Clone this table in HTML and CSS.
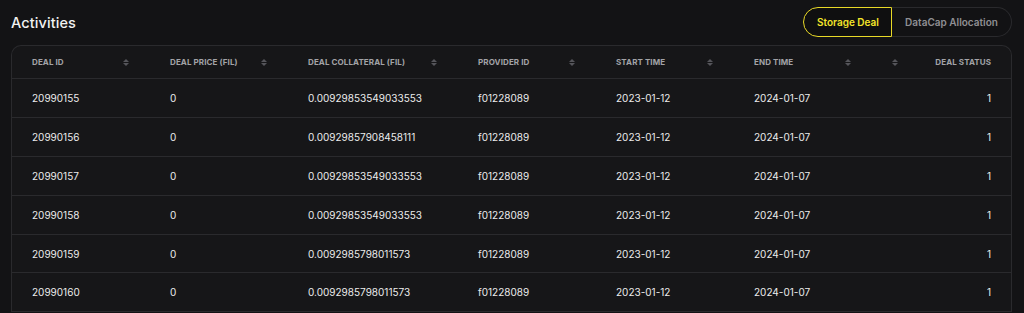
FILE: index.html
```html
<!DOCTYPE html>
<html>
<head>
<meta charset="utf-8">
<link rel="stylesheet" href="styles.css">
</head>
<body>
<div class="page">
  <div class="topbar">
    <h1 class="title">Activities</h1>
    <div class="tabs">
      <button class="tab tab-active">Storage Deal</button>
      <button class="tab tab-inactive">DataCap Allocation</button>
    </div>
  </div>
  <div class="table-wrap">
    <table class="table">
      <colgroup>
        <col class="c1"><col class="c2"><col class="c3"><col class="c4"><col class="c5"><col class="c6"><col class="c7">
      </colgroup>
      <thead>
        <tr>
          <th><div class="th"><span>Deal ID</span><span class="sort"></span></div></th>
          <th><div class="th"><span>Deal Price (FIL)</span><span class="sort"></span></div></th>
          <th><div class="th"><span>Deal Collateral (FIL)</span><span class="sort"></span></div></th>
          <th><div class="th"><span>Provider ID</span><span class="sort"></span></div></th>
          <th><div class="th"><span>Start Time</span><span class="sort"></span></div></th>
          <th><div class="th"><span>End Time</span><span class="sort"></span></div></th>
          <th><div class="th"><span class="sort"></span><span>Deal Status</span></div></th>
        </tr>
      </thead>
      <tbody>
        <tr><td>20990155</td><td>0</td><td>0.00929853549033553</td><td>f01228089</td><td>2023-01-12</td><td>2024-01-07</td><td class="r">1</td></tr>
        <tr><td>20990156</td><td>0</td><td>0.00929857908458111</td><td>f01228089</td><td>2023-01-12</td><td>2024-01-07</td><td class="r">1</td></tr>
        <tr><td>20990157</td><td>0</td><td>0.00929853549033553</td><td>f01228089</td><td>2023-01-12</td><td>2024-01-07</td><td class="r">1</td></tr>
        <tr><td>20990158</td><td>0</td><td>0.00929853549033553</td><td>f01228089</td><td>2023-01-12</td><td>2024-01-07</td><td class="r">1</td></tr>
        <tr><td>20990159</td><td>0</td><td>0.0092985798011573</td><td>f01228089</td><td>2023-01-12</td><td>2024-01-07</td><td class="r">1</td></tr>
        <tr><td>20990160</td><td>0</td><td>0.0092985798011573</td><td>f01228089</td><td>2023-01-12</td><td>2024-01-07</td><td class="r">1</td></tr>
      </tbody>
    </table>
  </div>
</div>
</body>
</html>
```
FILE: styles.css
```css
* { box-sizing: border-box; }
html, body { margin: 0; padding: 0; background: #131315; }
body { font-family: "Inter", "Liberation Sans", sans-serif; color: #ececec; overflow: hidden; }
.page { padding: 7px 12px 0 11px; }
.topbar { display: flex; justify-content: space-between; align-items: center; height: 30px; }
.title { margin: 0; font-size: 14.5px; font-weight: 500; color: #f2f2f2; letter-spacing: 0.1px; }
.tabs { display: flex; height: 30px; }
.tab { font-family: inherit; font-size: 10px; font-weight: 600; background: #121214; cursor: pointer; padding: 0 13px; }
.tab-active { color: #f4e52a; border: 1px solid #e8d927; border-radius: 15px 0 0 15px; background: #0f0f10; padding: 0 12px 0 13px; width: 89px; }
.tab-inactive { color: #8f8f93; border: 1px solid #2a2a2d; border-left: none; border-radius: 0 15px 15px 0; width: 120px; }
.table-wrap { margin-top: 8px; border: 1px solid #2a2a2d; border-bottom: none; border-radius: 10px 10px 0 0; background: #161618; overflow: hidden; }
.table { width: 100%; border-collapse: collapse; table-layout: fixed; }
.c1, .c2, .c4, .c5, .c6 { width: 138px; }
.c3 { width: 170px; }
.c7 { width: auto; }
th { height: 32.5px; padding: 0 21px 0 20px; border-bottom: 1px solid #2a2a2d; text-align: left; font-size: 8px; font-weight: 700; text-transform: uppercase; color: #a3a3a7; letter-spacing: 0.1px; }
th:last-child { padding-right: 20px; }
.th { display: flex; justify-content: space-between; align-items: center; }
.sort { display: inline-flex; flex-direction: column; align-items: center; gap: 1px; }
.sort::before, .sort::after { content: ""; width: 0; height: 0; border-left: 3px solid transparent; border-right: 3px solid transparent; }
.sort::before { border-bottom: 3px solid #55555a; }
.sort::after { border-top: 3px solid #55555a; }
td { height: 38.9px; padding: 0 20px; border-bottom: 1px solid #2a2a2d; font-size: 10px; color: #ececec; white-space: nowrap; }
td.r { text-align: right; }
```
